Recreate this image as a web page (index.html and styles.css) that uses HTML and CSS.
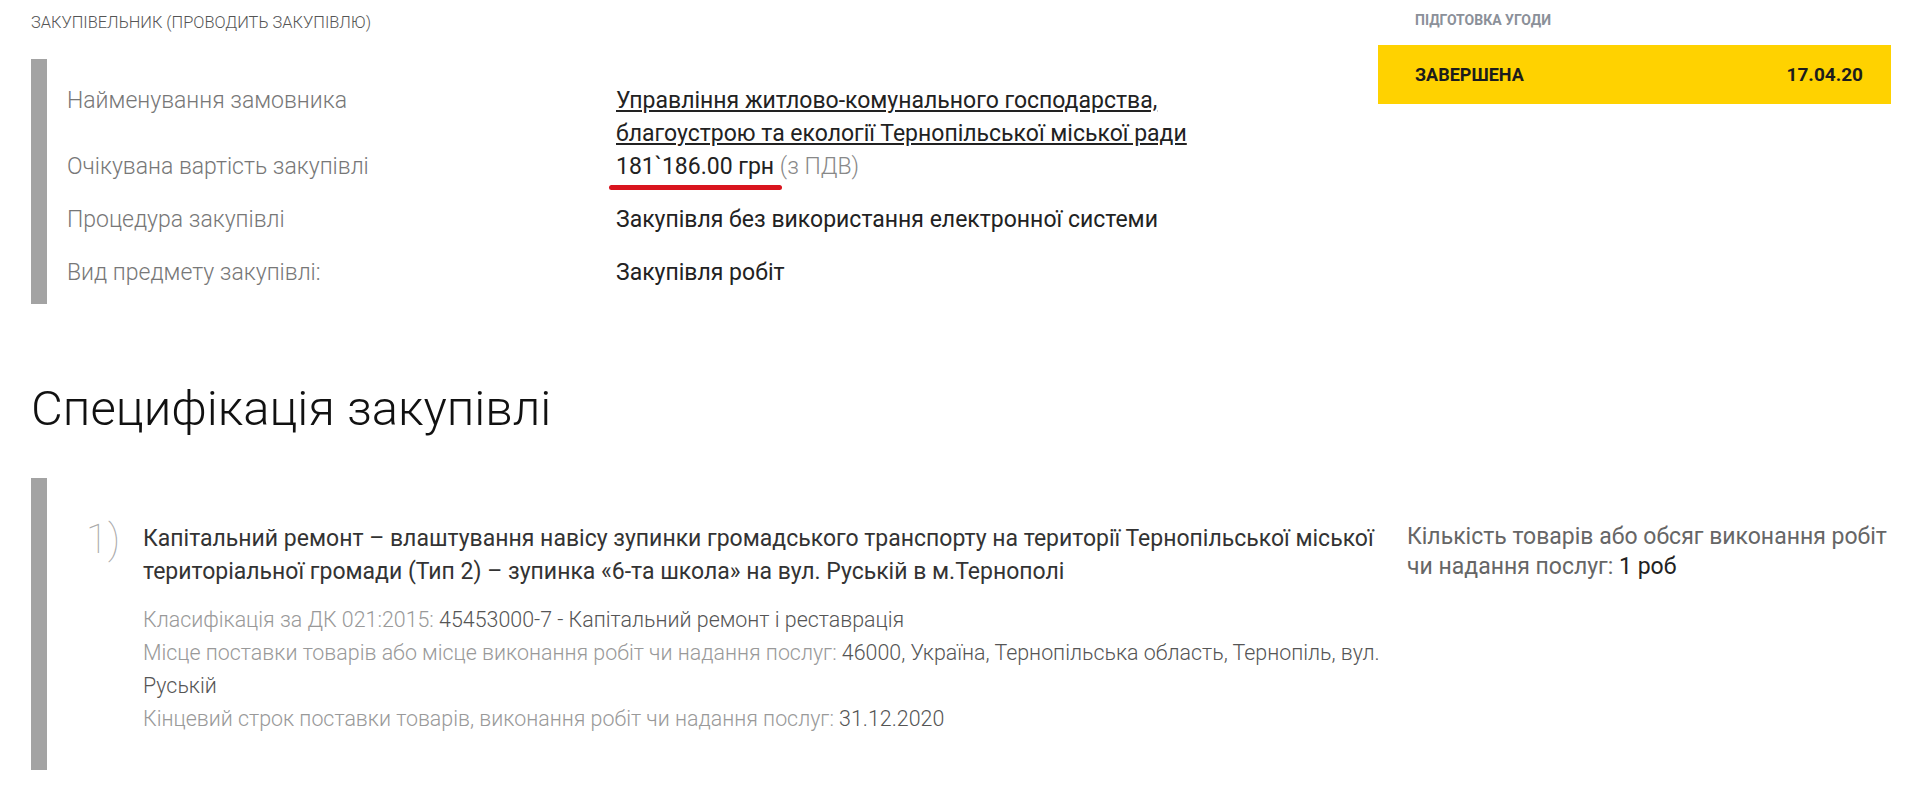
FILE: index.html
```html
<!DOCTYPE html>
<html lang="uk">

<head>
    <meta charset="UTF-8">
    <title>Закупівля</title>
    <link rel="stylesheet" href="styles.css">
</head>

<body>
    <div class="page">
        <div class="top">
            <div class="main">
                <h4 class="caption">Закупівельник (проводить закупівлю)</h4>
                <div class="info">
                    <div class="info-row tight">
                        <div class="info-label">Найменування замовника</div>
                        <div class="info-value"><a href="#">Управління житлово-комунального господарства, благоустрою та екології Тернопільської міської ради</a></div>
                    </div>
                    <div class="info-row">
                        <div class="info-label">Очікувана вартість закупівлі</div>
                        <div class="info-value"><span class="price">181`186.00 грн</span> <span class="muted">(з ПДВ)</span></div>
                    </div>
                    <div class="info-row">
                        <div class="info-label">Процедура закупівлі</div>
                        <div class="info-value">Закупівля без використання електронної системи</div>
                    </div>
                    <div class="info-row">
                        <div class="info-label">Вид предмету закупівлі:</div>
                        <div class="info-value">Закупівля робіт</div>
                    </div>
                </div>
            </div>

            <div class="side">
                <h4 class="side-title">Підготовка угоди</h4>
                <div class="status">
                    <span>Завершена</span>
                    <span class="status-date">17.04.20</span>
                </div>
            </div>
        </div>

        <h2 class="section-title">Специфікація закупівлі</h2>

        <div class="spec">
            <div class="spec-num">1)</div>
            <div class="spec-body">
                <div class="spec-title">Капітальний ремонт – влаштування навісу зупинки громадського транспорту на території Тернопільської міської територіальної громади (Тип 2) – зупинка «6-та школа» на вул. Руській в м.Тернополі</div>
                <div class="spec-meta">
                    <p>Класифікація за ДК 021:2015: <span>45453000-7 - Капітальний ремонт і реставрація</span></p>
                    <p>Місце поставки товарів або місце виконання робіт чи надання послуг: <span>46000, Україна, Тернопільська область, Тернопіль, вул. Руській</span></p>
                    <p>Кінцевий строк поставки товарів, виконання робіт чи надання послуг: <span>31.12.2020</span></p>
                </div>
            </div>
            <div class="spec-qty">Кількість товарів або обсяг виконання робіт чи надання послуг: <span>1 роб</span></div>
        </div>
    </div>
</body>

</html>
```

FILE: styles.css
```css
/* Reset styles */
* {
    margin: 0;
    padding: 0;
    box-sizing: border-box;
}

body {
    font-family: Roboto, "Open Sans", sans-serif;
    color: #222;
    background: #fff;
}

.page {
    padding: 0 29px 0 31px;
}

/* Top block */
.top {
    display: flex;
    gap: 36px;
}

.main {
    flex: 1;
}

.caption {
    font-size: 16.4px;
    font-weight: 300;
    text-transform: uppercase;
    color: #555;
    line-height: 20px;
    padding-top: 13px;
    height: 59px;
}

.info {
    border-left: 16px solid #a3a3a3;
    padding: 25px 0 15px 20px;
}

.info-row {
    display: flex;
    font-size: 23px;
    line-height: 33px;
    margin-bottom: 20px;
}

.info-row.tight {
    margin-bottom: 0;
}

.info-row:last-child {
    margin-bottom: 0;
}

.info-label {
    width: 549px;
    flex-shrink: 0;
    font-weight: 300;
    color: #777;
}

.info-value {
    flex: 1;
    max-width: 600px;
    color: #222;
}

.info-value a {
    color: #222;
    text-decoration: underline;
}

/* red marker under the price */
.price {
    position: relative;
}

.price::after {
    content: "";
    position: absolute;
    left: -7px;
    right: -8px;
    bottom: -10px;
    height: 5px;
    border-radius: 3px;
    background-color: #d9141e;
}

.muted {
    color: #888;
    font-weight: 300;
}

/* Side status */
.side {
    width: 513px;
}

.side-title {
    font-size: 14px;
    font-weight: 700;
    text-transform: uppercase;
    color: #8b9099;
    line-height: 18px;
    padding: 11px 0 0 37px;
    height: 45px;
}

.status {
    display: flex;
    justify-content: space-between;
    align-items: center;
    background-color: #ffd200;
    height: 59px;
    padding: 0 28px 0 37px;
    font-weight: 700;
    font-size: 18px;
    text-transform: uppercase;
    color: #1c1c1c;
}

.status-date {
    font-size: 19px;
}

/* Specification */
.section-title {
    font-size: 49px;
    font-weight: 300;
    color: #111;
    line-height: 52px;
    margin: 79px 0 43px;
}

.spec {
    display: flex;
    border-left: 16px solid #a3a3a3;
    padding: 44px 0 35px 39px;
}

.spec-num {
    width: 57px;
    flex-shrink: 0;
    font-size: 40px;
    font-weight: 100;
    color: #aaa;
    line-height: 36px;
}

.spec-body {
    width: 1262px;
    flex-shrink: 0;
}

.spec-title {
    font-size: 23px;
    line-height: 33px;
    color: #333;
}

.spec-meta {
    margin-top: 15px;
    font-size: 21.4px;
    font-weight: 300;
    line-height: 33px;
    color: #999;
}

.spec-meta span {
    color: #555;
}

.spec-qty {
    flex: 1;
    padding-left: 2px;
    font-size: 23px;
    line-height: 30px;
    color: #666;
}

.spec-qty span {
    color: #222;
}
```
